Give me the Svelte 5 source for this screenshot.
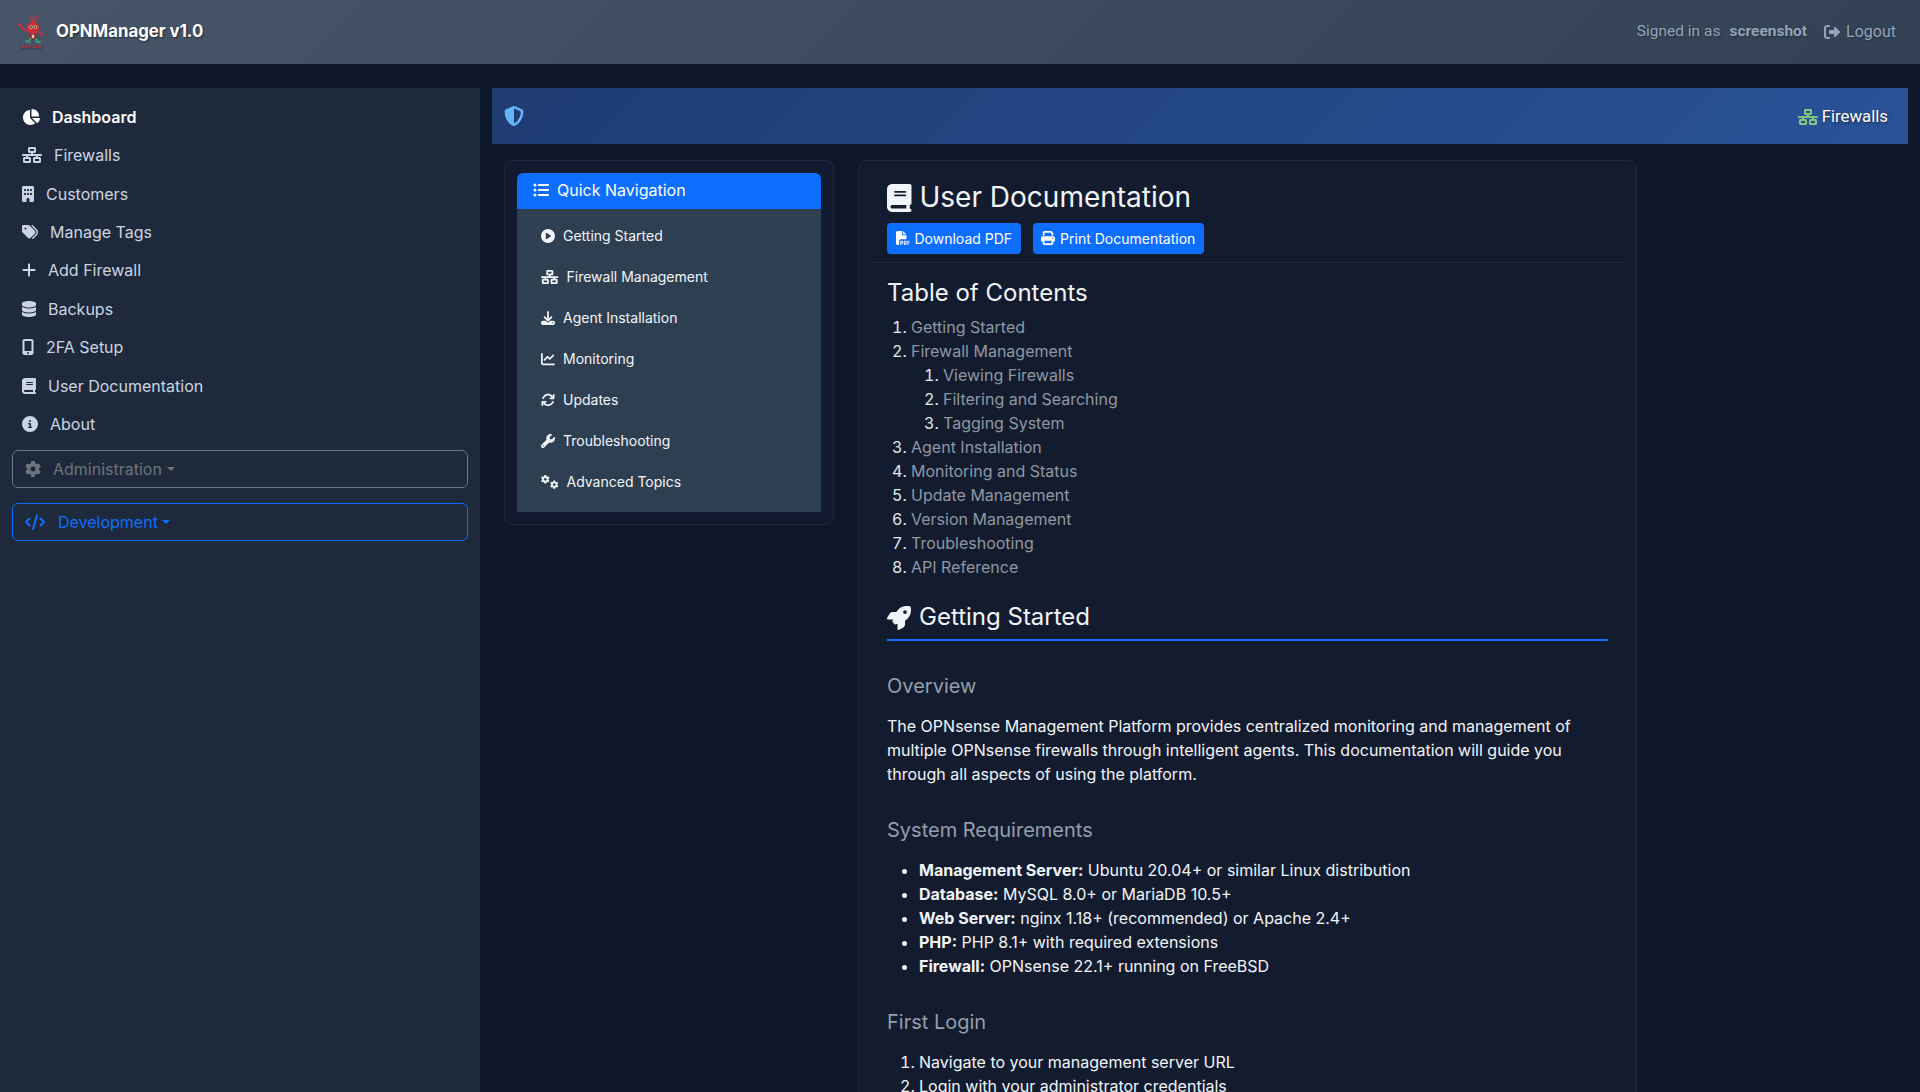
<script>
  const icons = {
    pie: [576, 'M304 240V16.6c0-9 7-16.6 16-16.6C443.7 0 544 100.3 544 224c0 9-7.6 16-16.6 16H304zM32 272C32 150.7 122.1 50.3 239 34.3c9.2-1.3 17 6.1 17 15.4V288L412.5 444.5c6.7 6.7 6.2 17.7-1.5 23.1C371.8 495.6 323.8 512 272 512C139.5 512 32 404.6 32 272zm526.4 16c9.3 0 16.6 7.8 15.4 17c-7.7 55.9-34.6 105.6-73.9 142.3c-6 5.6-15.4 5.2-21.2-.7L320 288H558.4z'],
    network: [640, 'M256 64H384v64H256V64zM240 0c-26.5 0-48 21.5-48 48v96c0 26.5 21.5 48 48 48h48v32H32c-17.7 0-32 14.3-32 32s14.3 32 32 32h96v32H80c-26.5 0-48 21.5-48 48v96c0 26.5 21.5 48 48 48H240c26.5 0 48-21.5 48-48V368c0-26.5-21.5-48-48-48H192V288H448v32H400c-26.5 0-48 21.5-48 48v96c0 26.5 21.5 48 48 48H560c26.5 0 48-21.5 48-48V368c0-26.5-21.5-48-48-48H512V288h96c17.7 0 32-14.3 32-32s-14.3-32-32-32H352V192h48c26.5 0 48-21.5 48-48V48c0-26.5-21.5-48-48-48H240zM96 448V384H224v64H96zm320-64H544v64H416V384z'],
    building: [384, 'M48 0C21.5 0 0 21.5 0 48V464c0 26.5 21.5 48 48 48h96V432c0-26.5 21.5-48 48-48s48 21.5 48 48v80h96c26.5 0 48-21.5 48-48V48c0-26.5-21.5-48-48-48H48zM64 240c0-8.8 7.2-16 16-16h32c8.8 0 16 7.2 16 16v32c0 8.8-7.2 16-16 16H80c-8.8 0-16-7.2-16-16V240zm112-16h32c8.8 0 16 7.2 16 16v32c0 8.8-7.2 16-16 16H176c-8.8 0-16-7.2-16-16V240c0-8.8 7.2-16 16-16zm80 16c0-8.8 7.2-16 16-16h32c8.8 0 16 7.2 16 16v32c0 8.8-7.2 16-16 16H272c-8.8 0-16-7.2-16-16V240zM80 96h32c8.8 0 16 7.2 16 16v32c0 8.8-7.2 16-16 16H80c-8.8 0-16-7.2-16-16V112c0-8.8 7.2-16 16-16zm80 16c0-8.8 7.2-16 16-16h32c8.8 0 16 7.2 16 16v32c0 8.8-7.2 16-16 16H176c-8.8 0-16-7.2-16-16V112zM272 96h32c8.8 0 16 7.2 16 16v32c0 8.8-7.2 16-16 16H272c-8.8 0-16-7.2-16-16V112c0-8.8 7.2-16 16-16z'],
    tags: [512, 'M345 39.1L472.8 168.4c52.4 53 52.4 138.2 0 191.2L360.8 472.9c-9.3 9.4-24.5 9.5-33.9 .2s-9.5-24.5-.2-33.9L438.6 325.9c33.9-34.3 33.9-89.4 0-123.7L310.9 72.9c-9.3-9.4-9.2-24.6 .2-33.9s24.6-9.2 33.9 .2zM0 229.5V80C0 53.5 21.5 32 48 32H197.5c17 0 33.3 6.7 45.3 18.7l168 168c25 25 25 65.5 0 90.5L277.3 442.7c-25 25-65.5 25-90.5 0l-168-168C6.7 262.7 0 246.5 0 229.5zM144 144a32 32 0 1 0 -64 0 32 32 0 1 0 64 0z'],
    plus: [448, 'M256 80c0-17.7-14.3-32-32-32s-32 14.3-32 32V224H48c-17.7 0-32 14.3-32 32s14.3 32 32 32H192V432c0 17.7 14.3 32 32 32s32-14.3 32-32V288H400c17.7 0 32-14.3 32-32s-14.3-32-32-32H256V80z'],
    database: [448, 'M448 80v48c0 44.2-100.3 80-224 80S0 172.2 0 128V80C0 35.8 100.3 0 224 0S448 35.8 448 80zM393.2 214.7c20.8-7.4 39.9-16.9 54.8-28.6V288c0 44.2-100.3 80-224 80S0 332.2 0 288V186.1c14.9 11.8 34 21.2 54.8 28.6C99.7 230.7 159.5 240 224 240s124.3-9.3 169.2-25.3zM0 346.1c14.9 11.8 34 21.2 54.8 28.6C99.7 390.7 159.5 400 224 400s124.3-9.3 169.2-25.3c20.8-7.4 39.9-16.9 54.8-28.6V432c0 44.2-100.3 80-224 80S0 476.2 0 432V346.1z'],
    mobile: [384, 'M16 64C16 28.7 44.7 0 80 0H304c35.3 0 64 28.7 64 64V448c0 35.3-28.7 64-64 64H80c-35.3 0-64-28.7-64-64V64zM224 448a32 32 0 1 0 -64 0 32 32 0 1 0 64 0zM304 64H80V384H304V64z'],
    book: [448, 'M96 0C43 0 0 43 0 96V416c0 53 43 96 96 96H384h32c17.7 0 32-14.3 32-32s-14.3-32-32-32V384c17.7 0 32-14.3 32-32V32c0-17.7-14.3-32-32-32H384 96zm0 384H352v64H96c-17.7 0-32-14.3-32-32s14.3-32 32-32zm32-240c0-8.8 7.2-16 16-16H336c8.8 0 16 7.2 16 16s-7.2 16-16 16H144c-8.8 0-16-7.2-16-16zm16 48H336c8.8 0 16 7.2 16 16s-7.2 16-16 16H144c-8.8 0-16-7.2-16-16s7.2-16 16-16z'],
    info: [512, 'M256 512A256 256 0 1 0 256 0a256 256 0 1 0 0 512zM216 336h24V272H216c-13.3 0-24-10.7-24-24s10.7-24 24-24h48c13.3 0 24 10.7 24 24v88h8c13.3 0 24 10.7 24 24s-10.7 24-24 24H216c-13.3 0-24-10.7-24-24s10.7-24 24-24zm40-208a32 32 0 1 1 0 64 32 32 0 1 1 0-64z'],
    gear: [512, 'M495.9 166.6c3.2 8.7 .5 18.4-6.4 24.6l-43.3 39.4c1.1 8.3 1.7 16.8 1.7 25.4s-.6 17.1-1.7 25.4l43.3 39.4c6.9 6.2 9.6 15.9 6.4 24.6c-4.4 11.9-9.7 23.3-15.8 34.3l-4.7 8.1c-6.6 11-14 21.4-22.1 31.2c-5.9 7.2-15.7 9.6-24.5 6.8l-55.7-17.7c-13.4 10.3-28.2 18.9-44 25.4l-12.5 57.1c-2 9.1-9 16.3-18.2 17.8c-13.8 2.3-28 3.5-42.5 3.5s-28.7-1.2-42.5-3.5c-9.2-1.5-16.2-8.7-18.2-17.8l-12.5-57.1c-15.8-6.5-30.6-15.1-44-25.4L83.1 425.9c-8.8 2.8-18.6 .3-24.5-6.8c-8.1-9.8-15.5-20.2-22.1-31.2l-4.7-8.1c-6.1-11-11.4-22.4-15.8-34.3c-3.2-8.7-.5-18.4 6.4-24.6l43.3-39.4C64.6 273.1 64 264.6 64 256s.6-17.1 1.7-25.4L22.4 191.2c-6.9-6.2-9.6-15.9-6.4-24.6c4.4-11.9 9.7-23.3 15.8-34.3l4.7-8.1c6.6-11 14-21.4 22.1-31.2c5.9-7.2 15.7-9.6 24.5-6.8l55.7 17.7c13.4-10.3 28.2-18.9 44-25.4l12.5-57.1c2-9.1 9-16.3 18.2-17.8C227.3 1.2 241.5 0 256 0s28.7 1.2 42.5 3.5c9.2 1.5 16.2 8.7 18.2 17.8l12.5 57.1c15.8 6.5 30.6 15.1 44 25.4l55.7-17.7c8.8-2.8 18.6-.3 24.5 6.8c8.1 9.8 15.5 20.2 22.1 31.2l4.7 8.1c6.1 11 11.4 22.4 15.8 34.3zM256 336a80 80 0 1 0 0-160 80 80 0 1 0 0 160z'],
    code: [640, 'M392.8 1.2c-17-4.9-34.7 5-39.6 22l-128 448c-4.9 17 5 34.7 22 39.6s34.7-5 39.6-22l128-448c4.9-17-5-34.7-22-39.6zm80.6 120.1c-12.5 12.5-12.5 32.8 0 45.3L562.7 256l-89.4 89.4c-12.5 12.5-12.5 32.8 0 45.3s32.8 12.5 45.3 0l112-112c12.5-12.5 12.5-32.8 0-45.3l-112-112c-12.5-12.5-32.8-12.5-45.3 0zm-306.7 0c-12.5-12.5-32.8-12.5-45.3 0l-112 112c-12.5 12.5-12.5 32.8 0 45.3l112 112c12.5 12.5 32.8 12.5 45.3 0s12.5-32.8 0-45.3L77.3 256l89.4-89.4c12.5-12.5 12.5-32.8 0-45.3z'],
    shield: [512, 'M256 0c4.6 0 9.2 1 13.4 2.9L457.7 82.8c22 9.3 38.4 31 38.3 57.2c-.5 99.2-41.3 280.7-213.6 363.2c-16.7 8-36.1 8-52.8 0C57.3 420.7 16.5 239.2 16 140c-.1-26.2 16.3-47.9 38.3-57.2L242.7 2.9C246.8 1 251.4 0 256 0zm0 66.8V444.8C394 378 431.1 230.1 432 141.4L256 66.8l0 0z'],
    list: [512, 'M64 144a48 48 0 1 0 0-96 48 48 0 1 0 0 96zM192 64c-17.7 0-32 14.3-32 32s14.3 32 32 32H480c17.7 0 32-14.3 32-32s-14.3-32-32-32H192zm0 160c-17.7 0-32 14.3-32 32s14.3 32 32 32H480c17.7 0 32-14.3 32-32s-14.3-32-32-32H192zm0 160c-17.7 0-32 14.3-32 32s14.3 32 32 32H480c17.7 0 32-14.3 32-32s-14.3-32-32-32H192zM64 464a48 48 0 1 0 0-96 48 48 0 1 0 0 96zm48-208a48 48 0 1 0 -96 0 48 48 0 1 0 96 0z'],
    play: [512, 'M0 256a256 256 0 1 1 512 0A256 256 0 1 1 0 256zM188.3 147.1c-7.6 4.2-12.3 12.3-12.3 20.9V344c0 8.7 4.7 16.7 12.3 20.9s16.8 4.1 24.3-.5l144-88c7.1-4.4 11.5-12.1 11.5-20.5s-4.4-16.1-11.5-20.5l-144-88c-7.4-4.5-16.7-4.7-24.3-.5z'],
    download: [512, 'M288 32c0-17.7-14.3-32-32-32s-32 14.3-32 32V274.7l-73.4-73.4c-12.5-12.5-32.8-12.5-45.3 0s-12.5 32.8 0 45.3l128 128c12.5 12.5 32.8 12.5 45.3 0l128-128c12.5-12.5 12.5-32.8 0-45.3s-32.8-12.5-45.3 0L288 274.7V32zM64 352c-35.3 0-64 28.7-64 64v32c0 35.3 28.7 64 64 64H448c35.3 0 64-28.7 64-64V416c0-35.3-28.7-64-64-64H346.5l-45.3 45.3c-25 25-65.5 25-90.5 0L165.5 352H64zm368 56a24 24 0 1 1 0 48 24 24 0 1 1 0-48z'],
    chart: [512, 'M64 64c0-17.7-14.3-32-32-32S0 46.3 0 64V400c0 44.2 35.8 80 80 80H480c17.7 0 32-14.3 32-32s-14.3-32-32-32H80c-8.8 0-16-7.2-16-16V64zm406.6 86.6c12.5-12.5 12.5-32.8 0-45.3s-32.8-12.5-45.3 0L320 210.7l-57.4-57.4c-12.5-12.5-32.8-12.5-45.3 0l-112 112c-12.5 12.5-12.5 32.8 0 45.3s32.8 12.5 45.3 0L240 221.3l57.4 57.4c12.5 12.5 32.8 12.5 45.3 0l128-128z'],
    sync: [512, 'M105.1 202.6c7.7-21.8 20.2-42.3 37.8-59.8c62.5-62.5 163.8-62.5 226.3 0L386.3 160H336c-17.7 0-32 14.3-32 32s14.3 32 32 32H463.5c0 0 0 0 0 0h.4c17.7 0 32-14.3 32-32V64c0-17.7-14.3-32-32-32s-32 14.3-32 32v51.2L414.4 97.6c-87.5-87.5-229.3-87.5-316.8 0C73.2 122 55.6 150.7 44.8 181.4c-5.9 16.7 2.9 34.9 19.5 40.8s34.9-2.9 40.8-19.5zM39 289.3c-5 1.5-9.8 4.2-13.7 8.2c-4 4-6.7 8.8-8.1 14c-.3 1.2-.6 2.5-.8 3.8c-.3 1.7-.4 3.4-.4 5.1V448c0 17.7 14.3 32 32 32s32-14.3 32-32V396.9l17.6 17.5 0 0c87.5 87.4 229.3 87.4 316.7 0c24.4-24.4 42.1-53.1 52.9-83.7c5.9-16.7-2.9-34.9-19.5-40.8s-34.9 2.9-40.8 19.5c-7.7 21.8-20.2 42.3-37.8 59.8c-62.5 62.5-163.8 62.5-226.3 0l-.1-.1L125.6 352H176c17.7 0 32-14.3 32-32s-14.3-32-32-32H48.4c-1.6 0-3.2 .1-4.8 .3s-3.1 .5-4.6 1z'],
    wrench: [512, 'M352 320c88.4 0 160-71.6 160-160c0-15.3-2.2-30.1-6.2-44.2c-3.1-10.8-16.4-13.2-24.3-5.3l-76.8 76.8c-3 3-7.1 4.7-11.3 4.7H336c-8.8 0-16-7.2-16-16V118.6c0-4.2 1.7-8.3 4.7-11.3l76.8-76.8c7.9-7.9 5.4-21.2-5.3-24.3C382.1 2.2 367.3 0 352 0C263.6 0 192 71.6 192 160c0 19.1 3.4 37.5 9.5 54.5L19.9 396.1C7.2 408.8 0 426.1 0 444.1C0 481.6 30.4 512 67.9 512c18 0 35.3-7.2 48-19.9L297.5 310.5c17 6.2 35.4 9.5 54.5 9.5zM80 408a24 24 0 1 1 0 48 24 24 0 1 1 0-48z'],
    pdf: [512, 'M0 64C0 28.7 28.7 0 64 0H224V128c0 17.7 14.3 32 32 32H384V304H176c-35.3 0-64 28.7-64 64V512H64c-35.3 0-64-28.7-64-64V64zm384 64H256V0L384 128zM176 352h32c30.9 0 56 25.1 56 56s-25.1 56-56 56H192v32c0 8.8-7.2 16-16 16s-16-7.2-16-16V448 368c0-8.8 7.2-16 16-16zm32 80c13.3 0 24-10.7 24-24s-10.7-24-24-24H192v48h16zm96-80h32c26.5 0 48 21.5 48 48v64c0 26.5-21.5 48-48 48H304c-8.8 0-16-7.2-16-16V368c0-8.8 7.2-16 16-16zm32 128c8.8 0 16-7.2 16-16V400c0-8.8-7.2-16-16-16H320v96h16zm80-112c0-8.8 7.2-16 16-16h48c8.8 0 16 7.2 16 16s-7.2 16-16 16H448v32h32c8.8 0 16 7.2 16 16s-7.2 16-16 16H448v48c0 8.8-7.2 16-16 16s-16-7.2-16-16V432 368z'],
    print: [512, 'M128 0C92.7 0 64 28.7 64 64v96h64V64H354.7L384 93.3V160h64V93.3c0-17-6.7-33.3-18.7-45.3L400 18.7C388 6.7 371.7 0 354.7 0H128zM384 352v32 64H128V384 368 352H384zm64 32h32c17.7 0 32-14.3 32-32V256c0-35.3-28.7-64-64-64H64c-35.3 0-64 28.7-64 64v96c0 17.7 14.3 32 32 32H64v64c0 35.3 28.7 64 64 64H384c35.3 0 64-28.7 64-64V384zM432 248a24 24 0 1 1 0 48 24 24 0 1 1 0-48z'],
    rocket: [512, 'M156.6 384.9L125.7 354c-8.5-8.5-11.5-20.8-7.7-32.2c3-8.9 7-20.5 11.8-33.8L24 288c-8.6 0-16.6-4.6-20.9-12.1s-4.2-16.7 .2-24.1l52.5-88.5c13-21.9 36.5-35.3 61.9-35.3l82.3 0c2.4-4 4.8-7.7 7.2-11.3C289.1-4.1 411.1-8.1 483.9 5.3c11.6 2.1 20.6 11.2 22.8 22.8c13.4 72.9 9.3 194.8-111.4 276.7c-3.5 2.4-7.3 4.8-11.3 7.2v82.3c0 25.4-13.4 49-35.3 61.9l-88.5 52.5c-7.4 4.4-16.6 4.5-24.1 .2s-12.1-12.2-12.1-20.9V380.8c-14.1 4.9-26.4 8.9-35.7 11.9c-11.2 3.6-23.4 .5-31.8-7.8zM384 168a40 40 0 1 0 0-80 40 40 0 1 0 0 80z'],
    logout: [512, 'M377.9 105.9L500.7 228.7c7.2 7.2 11.3 17.1 11.3 27.3s-4.1 20.1-11.3 27.3L377.9 406.1c-6.4 6.4-15 9.9-24 9.9c-18.7 0-33.9-15.2-33.9-33.9l0-62.1-128 0c-17.7 0-32-14.3-32-32l0-64c0-17.7 14.3-32 32-32l128 0 0-62.1c0-18.7 15.2-33.9 33.9-33.9c9 0 17.6 3.6 24 9.9zM160 96L96 96c-17.7 0-32 14.3-32 32l0 256c0 17.7 14.3 32 32 32l64 0c17.7 0 32 14.3 32 32s-14.3 32-32 32l-64 0c-53 0-96-43-96-96L0 128C0 75 43 32 96 32l64 0c17.7 0 32 14.3 32 32s-14.3 32-32 32z']
  };

  const sideLinks = [
    { label: 'Dashboard', icon: 'pie', active: true },
    { label: 'Firewalls', icon: 'network' },
    { label: 'Customers', icon: 'building' },
    { label: 'Manage Tags', icon: 'tags' },
    { label: 'Add Firewall', icon: 'plus' },
    { label: 'Backups', icon: 'database' },
    { label: '2FA Setup', icon: 'mobile' },
    { label: 'User Documentation', icon: 'book' },
    { label: 'About', icon: 'info' }
  ];

  const quickLinks = [
    { label: 'Getting Started', icon: 'play' },
    { label: 'Firewall Management', icon: 'network' },
    { label: 'Agent Installation', icon: 'download' },
    { label: 'Monitoring', icon: 'chart' },
    { label: 'Updates', icon: 'sync' },
    { label: 'Troubleshooting', icon: 'wrench' },
    { label: 'Advanced Topics', icon: 'gears' }
  ];
</script>

{#snippet icon(name, size)}
  {#if name === 'gears'}
    <svg class="ico" viewBox="0 0 640 512" style="height:{size}px;width:{size * 1.25}px" aria-hidden="true">
      <path transform="scale(.62)" d={icons.gear[1]} />
      <path transform="translate(330 200) scale(.6)" d={icons.gear[1]} />
    </svg>
  {:else}
    <svg class="ico" viewBox="0 0 {icons[name][0]} 512" style="height:{size}px;width:{size * icons[name][0] / 512}px" aria-hidden="true">
      <path d={icons[name][1]} />
    </svg>
  {/if}
{/snippet}

<div class="page">
  <header class="topbar">
    <a class="brand" href="#top">
      <svg class="logo" viewBox="3 1 34 40" aria-hidden="true">
        <g fill="none" stroke="#c9303b" stroke-linecap="round">
          <path stroke-width="1.3" d="M20 11L17 6M20 11l1-6M20 11l4-4M21 6l3-1" />
          <path stroke-width="2" d="M15 20l-5-2-3-5M8 13l-2 1" />
          <path stroke-width="1.8" d="M26 21l3 3" />
        </g>
        <circle cx="20" cy="17" r="6.2" fill="#c9303b" />
        <circle cx="18" cy="16" r="1.8" fill="#d8c9a0" />
        <circle cx="22.5" cy="16" r="1.8" fill="#d8c9a0" />
        <circle cx="18" cy="16" r=".9" fill="#2c2a28" />
        <circle cx="22.5" cy="16" r=".9" fill="#2c2a28" />
        <rect x="16.5" y="23" width="7" height="5" fill="#8e2b2b" />
        <rect x="18.8" y="23.8" width="2.4" height="3.2" fill="#e4d8b8" />
        <g fill="none" stroke="#3a9a78" stroke-width="2" stroke-linecap="round">
          <path d="M17 28l-1 3-3-1" />
          <path d="M23 28l1 3h3" />
        </g>
        <text x="8" y="36.6" class="logo-text">AGIT SDR</text>
      </svg>
      <span>OPNManager v1.0</span>
    </a>
    <div class="user">
      <span class="signed">Signed in as</span>
      <strong>screenshot</strong>
      <a class="logout" href="#top">{@render icon('logout', 16)}Logout</a>
    </div>
  </header>

  <div class="layout">
    <aside class="sidebar">
      <nav class="side-nav">
        {#each sideLinks as link}
          <a class="side-link" class:active={link.active} href="#top">
            {@render icon(link.icon, 16)}
            <span>{link.label}</span>
          </a>
        {/each}
      </nav>
      <button class="side-btn admin" type="button">
        {@render icon('gear', 16)}
        <span>Administration</span><i class="caret"></i>
      </button>
      <button class="side-btn dev" type="button">
        {@render icon('code', 16)}
        <span>Development</span><i class="caret"></i>
      </button>
    </aside>

    <main class="main">
      <div class="banner">
        <span class="shield">{@render icon('shield', 20)}</span>
        <a class="banner-link" href="#top">
          <span class="green">{@render icon('network', 16)}</span>
          Firewalls
        </a>
      </div>

      <div class="columns">
        <div class="card nav-card">
          <div class="quick">
            <div class="quick-head">{@render icon('list', 16)}<span>Quick Navigation</span></div>
            <div class="quick-body">
              {#each quickLinks as link}
                <a class="quick-link" href="#top">
                  {@render icon(link.icon, 14)}
                  <span>{link.label}</span>
                </a>
              {/each}
            </div>
          </div>
        </div>

        <article class="card doc">
          <div class="doc-head">
            <h1>{@render icon('book', 28)}<span>User Documentation</span></h1>
            <div class="actions">
              <a class="btn" href="#top">{@render icon('pdf', 14)}Download PDF</a>
              <a class="btn" href="#top">{@render icon('print', 14)}Print Documentation</a>
            </div>
          </div>

          <div class="doc-body">
            <h2 class="toc-title">Table of Contents</h2>
            <ol class="toc">
              <li><a href="#top">Getting Started</a></li>
              <li>
                <a href="#top">Firewall Management</a>
                <ol>
                  <li><a href="#top">Viewing Firewalls</a></li>
                  <li><a href="#top">Filtering and Searching</a></li>
                  <li><a href="#top">Tagging System</a></li>
                </ol>
              </li>
              <li><a href="#top">Agent Installation</a></li>
              <li><a href="#top">Monitoring and Status</a></li>
              <li><a href="#top">Update Management</a></li>
              <li><a href="#top">Version Management</a></li>
              <li><a href="#top">Troubleshooting</a></li>
              <li><a href="#top">API Reference</a></li>
            </ol>

            <h2 class="section">{@render icon('rocket', 24)}<span>Getting Started</span></h2>

            <h3 class="first">Overview</h3>
            <p>The OPNsense Management Platform provides centralized monitoring and management of multiple OPNsense firewalls through intelligent agents. This documentation will guide you through all aspects of using the platform.</p>

            <h3>System Requirements</h3>
            <ul>
              <li><strong>Management Server:</strong> Ubuntu 20.04+ or similar Linux distribution</li>
              <li><strong>Database:</strong> MySQL 8.0+ or MariaDB 10.5+</li>
              <li><strong>Web Server:</strong> nginx 1.18+ (recommended) or Apache 2.4+</li>
              <li><strong>PHP:</strong> PHP 8.1+ with required extensions</li>
              <li><strong>Firewall:</strong> OPNsense 22.1+ running on FreeBSD</li>
            </ul>

            <h3>First Login</h3>
            <ol class="steps">
              <li>Navigate to your management server URL</li>
              <li>Login with your administrator credentials</li>
            </ol>
          </div>
        </article>
      </div>
    </main>
  </div>
</div>

<style>
  :global(body) {
    margin: 0;
    background: #0f172a;
    font-family: Inter, "Liberation Sans", sans-serif;
    font-size: 16px;
    line-height: 1.5;
    color: #e2e8f0;
  }

  a {
    text-decoration: none;
    color: inherit;
  }

  .ico {
    fill: currentColor;
    flex: none;
    display: inline-block;
  }

  .page {
    height: 1092px;
    overflow: hidden;
  }

  .topbar {
    height: 64px;
    display: flex;
    align-items: center;
    justify-content: space-between;
    padding: 0 24px 0 16px;
    background: linear-gradient(135deg, #475569, #334155);
  }

  .brand {
    display: flex;
    align-items: center;
    gap: 6px;
    font-weight: 700;
    font-size: 16.8px;
    color: #fff;
    text-shadow: 1px 1px 2px rgba(0, 0, 0, 0.5);
  }

  .logo {
    width: 34px;
    height: 40px;
  }

  .logo-text {
    font-family: "Liberation Sans", sans-serif;
    font-size: 4.2px;
    font-weight: 700;
    fill: #c9303b;
  }

  .user {
    display: flex;
    align-items: center;
    font-family: Roboto, sans-serif;
    font-size: 15.5px;
    color: #94a3b8;
    text-shadow: 1px 1px 2px rgba(0, 0, 0, 0.3);
  }

  .user strong {
    margin-left: 9px;
    font-weight: 700;
  }

  .logout {
    display: flex;
    align-items: center;
    gap: 6px;
    margin-left: 17px;
    font-size: 16px;
  }

  .layout {
    display: flex;
    padding-top: 24px;
  }

  .sidebar {
    width: 480px;
    flex: none;
    box-sizing: border-box;
    height: 1004px;
    padding: 9.7px 12px;
    background: #1e293b;
  }

  .side-nav {
    display: flex;
    flex-direction: column;
  }

  .side-link {
    display: flex;
    align-items: center;
    gap: 12px;
    padding: 7.2px 10px;
    color: #cbd5e1;
  }

  .side-link.active {
    color: #fff;
    font-weight: 600;
  }

  .side-btn {
    display: flex;
    align-items: center;
    width: 100%;
    height: 38px;
    padding: 0 12px;
    background: none;
    border: 1px solid;
    border-radius: 6px;
    font: inherit;
    text-align: left;
  }

  .admin {
    margin-top: 7px;
    color: #6c757d;
    border-color: #6c757d;
  }

  .admin span {
    margin-left: 12px;
  }

  .admin .caret {
    margin-left: 5px;
  }

  .dev {
    margin-top: 15px;
    color: #0d6efd;
    border-color: #0d6efd;
  }

  .dev span {
    margin-left: 13px;
  }

  .caret {
    margin-left: 4px;
    border-top: 4.8px solid;
    border-left: 4.8px solid transparent;
    border-right: 4.8px solid transparent;
  }

  .main {
    flex: 1;
    min-width: 0;
    padding: 0 12px;
  }

  .banner {
    height: 56px;
    display: flex;
    align-items: center;
    justify-content: space-between;
    padding: 0 20px 0 12px;
    background: linear-gradient(135deg, #1e3c72, #2a5298);
  }

  .shield {
    display: flex;
    color: #64b5f6;
  }

  .banner-link {
    display: flex;
    align-items: center;
    gap: 4px;
    padding-top: 2px;
    font-family: Roboto, sans-serif;
    font-size: 16.8px;
    color: #fff;
    text-shadow: 1px 1px 2px rgba(0, 0, 0, 0.5);
  }

  .green {
    display: flex;
    color: #81c784;
  }

  .columns {
    display: flex;
    align-items: flex-start;
    gap: 24px;
    padding: 16px 0 0 12px;
  }

  .card {
    flex: none;
    box-sizing: border-box;
    background: #111a2e;
    border: 1px solid #1e293b;
    border-radius: 8px;
  }

  .nav-card {
    width: 330px;
    padding: 12px;
  }

  .quick-head {
    display: flex;
    align-items: center;
    gap: 8px;
    height: 36px;
    box-sizing: border-box;
    padding: 0 16px 3px;
    background: #0d6efd;
    color: #fff;
    border-radius: 6px 6px 0 0;
  }

  .quick-body {
    display: flex;
    flex-direction: column;
    box-sizing: border-box;
    padding: 6px 0 10px 24px;
    background: #2f3f52;
    height: 303px;
  }

  .quick-link {
    display: flex;
    align-items: center;
    gap: 8px;
    height: 41px;
    flex: none;
    font-size: 14px;
    color: #f1f5f9;
  }

  .doc {
    width: 779px;
    height: 1100px;
    padding: 8px 12px 0;
    background: #131c2e;
  }

  .doc-head {
    padding: 12px 16px 8px;
    border-bottom: 1px solid #1e293b;
  }

  h1 {
    display: flex;
    align-items: center;
    gap: 8px;
    margin: 0 0 8px;
    font-size: 28px;
    font-weight: 400;
    line-height: 1.2;
    color: #f1f5f9;
  }

  .actions {
    display: flex;
    gap: 12px;
  }

  .btn {
    display: flex;
    align-items: center;
    gap: 5px;
    height: 31px;
    padding: 0 8.5px;
    box-sizing: border-box;
    background: #0d6efd;
    border-radius: 4px;
    color: #fff;
    font-size: 14px;
  }

  .doc-body {
    padding: 16px 16px 0;
  }

  h2 {
    margin: 0;
    font-size: 24px;
    font-weight: 400;
    line-height: 1.2;
    color: #f1f5f9;
  }

  .toc-title {
    margin-bottom: 8px;
  }

  ol,
  ul {
    margin: 0;
    padding-left: 32px;
  }

  .toc {
    padding-left: 24px;
  }

  .toc a {
    color: #8f97a3;
  }

  .section {
    display: flex;
    align-items: center;
    gap: 8px;
    margin-top: 24px;
    padding-bottom: 7px;
    border-bottom: 2px solid #0d6efd;
  }

  h3 {
    margin: 32px 0 16px;
    font-size: 20px;
    font-weight: 400;
    line-height: 1.2;
    color: #949eac;
  }

  h3.first {
    margin-top: 33px;
  }

  p {
    margin: 0;
    color: #f1f5f9;
  }

  ul,
  .steps {
    color: #f1f5f9;
  }

  strong {
    font-weight: 700;
  }
</style>
